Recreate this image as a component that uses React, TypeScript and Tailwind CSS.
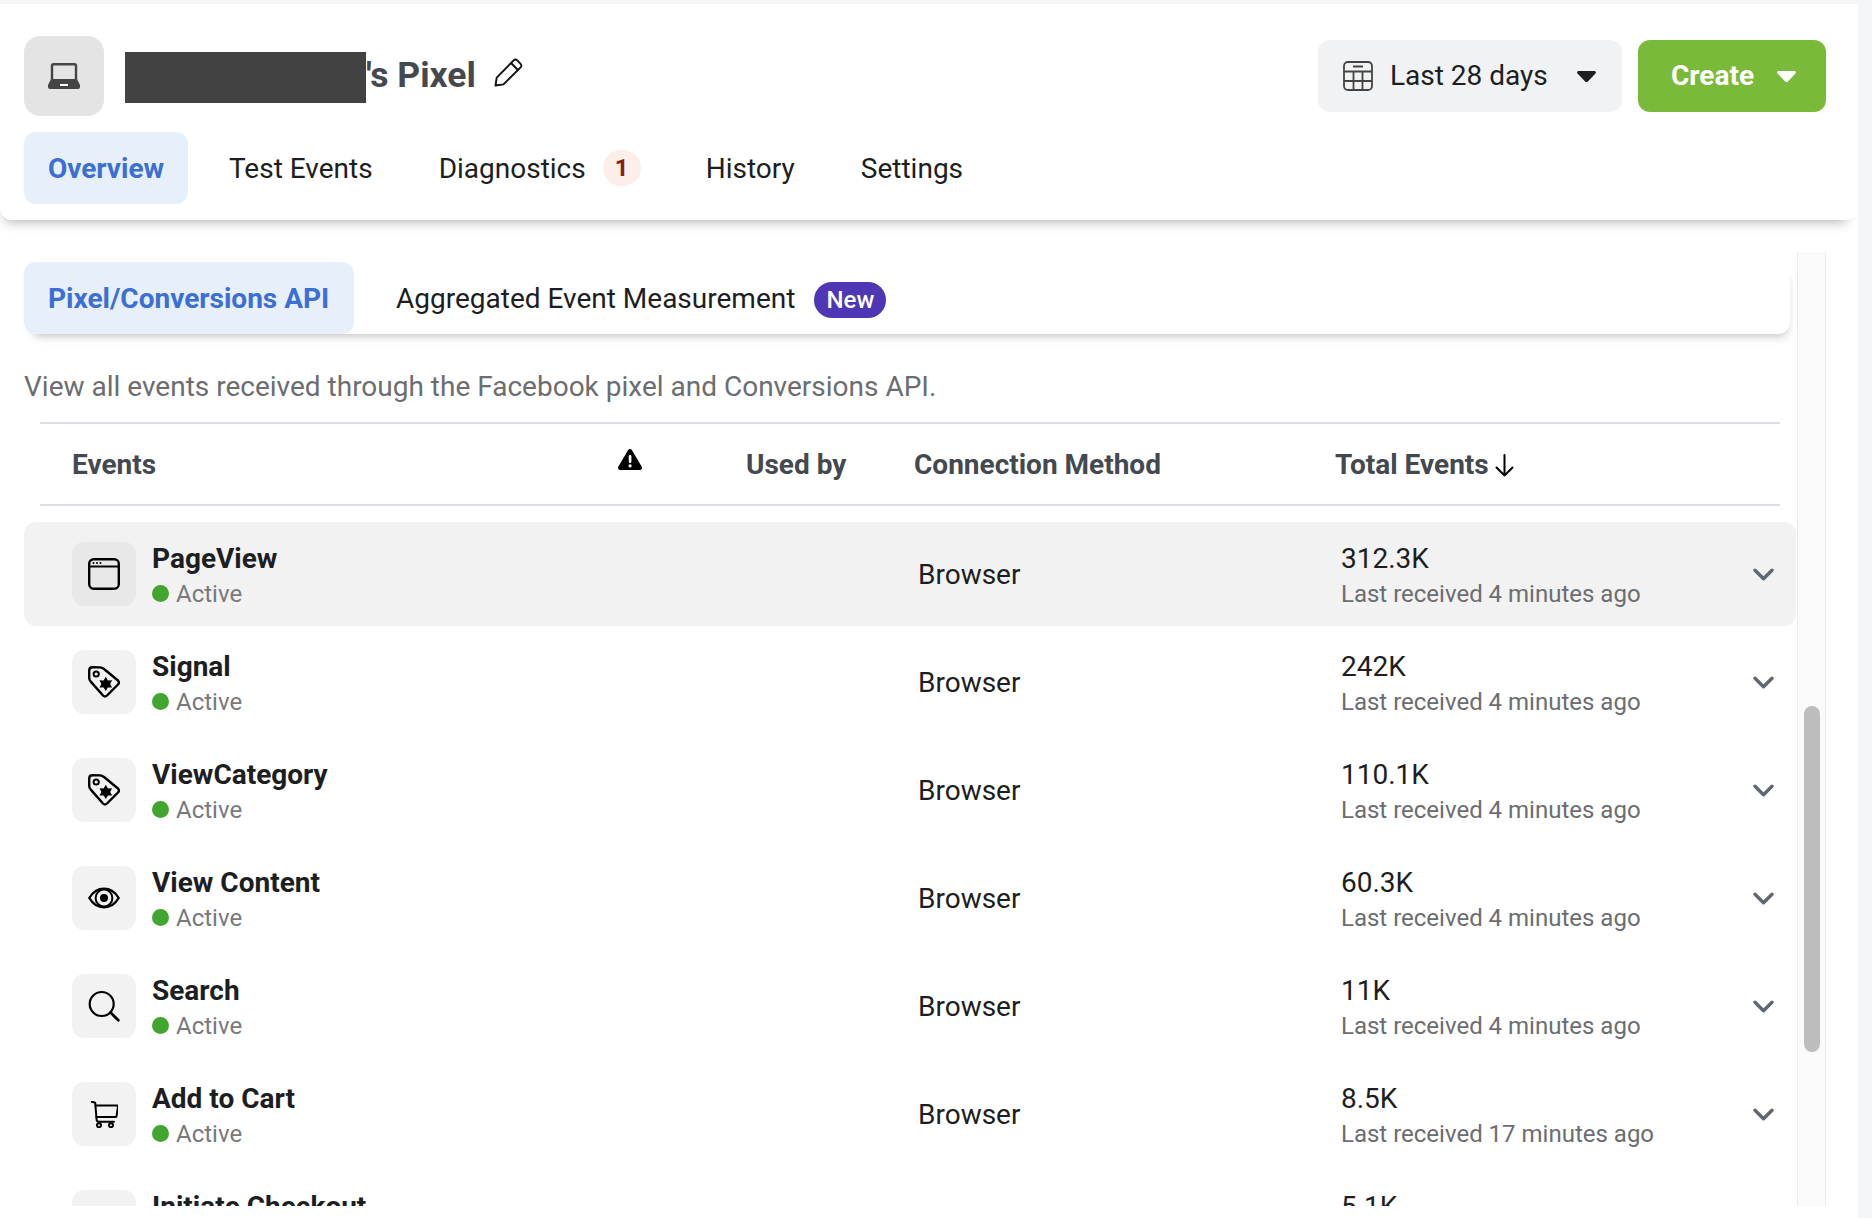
import React from 'react';

const events = [
  { name: 'PageView', total: '312.3K', last: 'Last received 4 minutes ago', icon: 'page' },
  { name: 'Signal', total: '242K', last: 'Last received 4 minutes ago', icon: 'tag' },
  { name: 'ViewCategory', total: '110.1K', last: 'Last received 4 minutes ago', icon: 'tag' },
  { name: 'View Content', total: '60.3K', last: 'Last received 4 minutes ago', icon: 'eye' },
  { name: 'Search', total: '11K', last: 'Last received 4 minutes ago', icon: 'search' },
  { name: 'Add to Cart', total: '8.5K', last: 'Last received 17 minutes ago', icon: 'cart' },
  { name: 'Initiate Checkout', total: '5.1K', last: 'Last received 17 minutes ago', icon: 'none' },
];

function EventIcon({ type }: { type: string }) {
  const common = { width: 32, height: 32, viewBox: '0 0 32 32', fill: 'none', stroke: '#000', strokeWidth: 2.4, strokeLinecap: 'round' as const, strokeLinejoin: 'round' as const };
  if (type === 'page') {
    return (
      <svg {...common}>
        <rect x="1.2" y="1.2" width="29.6" height="29.6" rx="4.5" />
        <path d="M1.2 8.5h29.6" strokeWidth={2} />
        <circle cx="5.5" cy="5" r="1" fill="#000" stroke="none" />
        <circle cx="9" cy="5" r="1" fill="#000" stroke="none" />
        <circle cx="12.5" cy="5" r="1" fill="#000" stroke="none" />
      </svg>
    );
  }
  if (type === 'tag') {
    return (
      <svg {...common}>
        <path d="M4.5 1.3Q1.2 1.3 1.2 4.5V12Q1.2 14 2.8 15.6L15 29.5Q17 31.4 19 29.5L30 18.5Q31.8 16.5 30 14.5L16 3Q14 1.6 12 1.4Z" />
        <circle cx="8.2" cy="8" r="2.6" strokeWidth={2} />
        <path
          d="M17.8 10.8l2.1 3.6 4.2-.2-1.9 3.7 1.9 3.6-4.2-.1-2.1 3.5-2.2-3.5-4.1.1 1.9-3.6-1.9-3.7 4.1.2z"
          fill="#000"
          stroke="none"
        />
      </svg>
    );
  }
  if (type === 'eye') {
    return (
      <svg {...common}>
        <path d="M1.3 16C5 9.8 10 6.6 16 6.6S27 9.8 30.7 16C27 22.2 22 25.4 16 25.4S5 22.2 1.3 16Z" />
        <circle cx="16" cy="16" r="8.4" strokeWidth={2} />
        <circle cx="16" cy="16" r="4" fill="#000" stroke="none" />
      </svg>
    );
  }
  if (type === 'search') {
    return (
      <svg {...common} strokeWidth={2.2}>
        <circle cx="13.7" cy="14" r="12" />
        <path d="M22.5 22.6l7.8 7.6" strokeWidth={2.8} />
      </svg>
    );
  }
  if (type === 'cart') {
    return (
      <svg width="27" height="27" viewBox="0 0 27 27" fill="none" stroke="#000" strokeWidth="2" strokeLinecap="round" strokeLinejoin="round">
        <path d="M.8.8l3.4.9L5.6 18.6a2.4 2.4 0 0 0 2.4 2.2h15" />
        <path d="M4.6 4.4h21.6c.6 0 .9.4.8 1l-1.4 9.6c-.1.6-.5 1-1.1 1H5.4" />
        <circle cx="8" cy="24.2" r="2" />
        <circle cx="20" cy="24.2" r="2" />
      </svg>
    );
  }
  return null;
}

function Chevron() {
  return (
    <svg width="21" height="13" viewBox="0 0 21 13" fill="none" stroke="#606770" strokeWidth="3.4" strokeLinecap="round" strokeLinejoin="round">
      <path d="M2 2.2l8.5 8.5L19 2.2" />
    </svg>
  );
}

function Caret({ color }: { color: string }) {
  return (
    <svg width="19" height="11" viewBox="0 0 19 11" fill={color}>
      <path d="M1.6 0h15.8c1.3 0 2 1.5 1.1 2.5l-7.4 7.8a2.2 2.2 0 0 1-3.2 0L.5 2.5C-.4 1.5.3 0 1.6 0z" />
    </svg>
  );
}

export default function App() {
  return (
    <div className="w-[1872px] h-[1218px] overflow-hidden bg-[#f5f6f7] pt-1 [font-family:Roboto,sans-serif] text-[28px] text-[#1c1e21]">
      <div className="w-[1858px] h-[1214px] bg-white rounded-t-2xl flex flex-col">
        {/* Header */}
        <header className="relative z-10 h-[216px] shrink-0 rounded-b-xl bg-white px-6 pt-8 shadow-[-3px_10px_12px_-8px_rgba(0,0,0,0.3)]">
          <div className="flex items-center justify-between pr-2 h-20">
            <div className="flex items-center">
              <div className="w-20 h-20 rounded-2xl bg-[#e4e4e4] flex items-center justify-center">
                <svg width="32" height="26" viewBox="0 0 32 26" fill="none">
                  <path d="M4 16.5V2.8c0-.9.7-1.6 1.6-1.6h20.8c.9 0 1.6.7 1.6 1.6v13.7" stroke="#444" strokeWidth="2.4" />
                  <path d="M3 16h26l3 6v2a2 2 0 0 1-2 2H2a2 2 0 0 1-2-2v-2z" fill="#444" />
                  <rect x="12" y="21" width="8" height="2" fill="#fff" />
                </svg>
              </div>
              <div className="ml-[21px] mt-0.5 w-[241px] h-[51px] bg-[#424242]" />
              <h1 className="text-[35.5px] font-bold text-[#444950] leading-none">'s Pixel</h1>
              <svg className="ml-[18px] -mt-2" width="29" height="29" viewBox="0 0 29 29" fill="none" stroke="#111" strokeWidth="1.9" strokeLinejoin="round">
                <path d="M1.5 27.5l1.2-7.8L19.6 2.4c1-1 2.6-1 3.6 0l3.4 3.4c1 1 1 2.6 0 3.6L9.5 26.4z" />
                <path d="M17 5l7 7" />
              </svg>
            </div>
            <div className="flex items-center gap-4">
              <button className="w-[304px] h-[72px] rounded-xl bg-[#f1f2f3] flex items-center pl-[25px] text-[#1c1e21]">
                <svg width="30" height="30" viewBox="0 0 30 30" fill="none" stroke="#444" strokeWidth="1.8">
                  <rect x="1" y="1" width="28" height="28" rx="4" />
                  <path d="M1 10.5h28M1 20h28M10.5 10.5V29M19.5 10.5V29" />
                  <path d="M10 5.5h10" strokeWidth="2" />
                </svg>
                <span className="ml-[17px]">Last 28 days</span>
                <span className="ml-[29px] flex"><Caret color="#1c1e21" /></span>
              </button>
              <button className="w-[188px] h-[72px] rounded-xl bg-[#7aba3a] flex items-center pl-[33px] text-white font-bold">
                <span>Create</span>
                <span className="ml-[23px] flex"><Caret color="#fff" /></span>
              </button>
            </div>
          </div>

          <nav className="mt-4 flex items-center h-[72px]">
            <a className="h-[72px] w-[164px] pt-0.5 rounded-xl bg-[#e7effb] flex items-center justify-center font-bold text-[#3c6fd4]">Overview</a>
            <a className="ml-[41px] pt-0.5">Test Events</a>
            <a className="ml-[66px] pt-0.5">Diagnostics</a>
            <span className="ml-[17px] w-[38px] h-9 rounded-full bg-[#fceee9] flex items-center justify-center text-2xl font-bold text-[#8a1f11]">1</span>
            <a className="ml-[65px] pt-0.5">History</a>
            <a className="ml-[66px] pt-0.5">Settings</a>
          </nav>
        </header>

        {/* Body */}
        <div className="mt-8 ml-6 mr-8 h-[954px] flex overflow-hidden">
          <main className="w-[1773px] shrink-0 pt-2.5">
            <div className="mr-[7px] h-[72px] flex items-center rounded-xl bg-white shadow-[3px_8px_10px_-6px_rgba(0,0,0,0.25)]">
              <a className="h-[72px] w-[330px] pl-6 pt-0.5 rounded-xl bg-[#e7effb] flex items-center font-bold text-[#3c6fd4]">Pixel/Conversions API</a>
              <a className="ml-[42px] pt-0.5">Aggregated Event Measurement</a>
              <span className="ml-[19px] mt-1 w-[72px] h-9 rounded-full bg-[#4e36b4] flex items-center justify-center text-2xl font-medium text-white">New</span>
            </div>

            <p className="mt-[36px] leading-[34px] text-[#6b6d70]">View all events received through the Facebook pixel and Conversions API.</p>

            <div className="mt-[18px] ml-4 w-[1740px] h-[84px] pt-0.5 border-y-2 border-[#dadde1] flex items-center pl-8 font-bold text-[#444950]">
              <span className="w-[546px]">Events</span>
              <span className="w-[128px] -mt-3 flex">
                <svg width="24" height="21" viewBox="0 0 24 21">
                  <path d="M10 1.2a2.3 2.3 0 0 1 4 0l9.6 16.4a2.2 2.2 0 0 1-2 3.4H2.4a2.2 2.2 0 0 1-2-3.4z" fill="#000" />
                  <rect x="10.8" y="6" width="2.6" height="8" rx="1.2" fill="#fff" />
                  <circle cx="12.1" cy="16.8" r="1.6" fill="#fff" />
                </svg>
              </span>
              <span className="w-[168px]">Used by</span>
              <span className="w-[421px]">Connection Method</span>
              <span className="flex items-center">
                Total Events
                <svg className="ml-[6px]" width="19" height="23" viewBox="0 0 19 23" fill="none" stroke="#000" strokeWidth="2" strokeLinecap="round" strokeLinejoin="round">
                  <path d="M9.5 1v20.5M1.5 13.5l8 8 8-8" />
                </svg>
              </span>
            </div>

            <div className="mt-4 flex flex-col gap-1">
              {events.map((e, i) => (
                <div key={e.name} className={`h-[104px] mr-px shrink-0 rounded-xl flex items-center pl-12 ${i === 0 ? 'bg-[#f2f2f2]' : ''}`}>
                  <div className={`w-16 h-16 shrink-0 rounded-xl flex items-center justify-center ${i === 0 ? 'bg-[#e8e8e8]' : 'bg-[#f2f2f2]'}`}>
                    <EventIcon type={e.icon} />
                  </div>
                  <div className="ml-4 w-[766px] pt-1">
                    <div className="font-bold leading-[35px] text-[#1c1e21]">{e.name}</div>
                    <div className="flex items-center leading-9 text-2xl text-[#77797c]">
                      <span className="w-[17px] h-[17px] rounded-full bg-[#42a52f] mr-[7px]" />
                      Active
                    </div>
                  </div>
                  <div className="w-[423px] pt-0.5">Browser</div>
                  <div className="w-[412px] pt-1">
                    <div className="leading-[35px]">{e.total}</div>
                    <div className="leading-9 text-2xl text-[#6b6d70]">{e.last}</div>
                  </div>
                  <Chevron />
                </div>
              ))}
            </div>
          </main>

          {/* Scrollbar */}
          <div className="relative w-[29px] shrink-0 bg-[#fafafa] border-x border-[#ebebeb]">
            <div className="absolute left-[6px] top-[454px] w-4 h-[346px] rounded-lg bg-[#bdbdbd]" />
          </div>
        </div>
      </div>
    </div>
  );
}
